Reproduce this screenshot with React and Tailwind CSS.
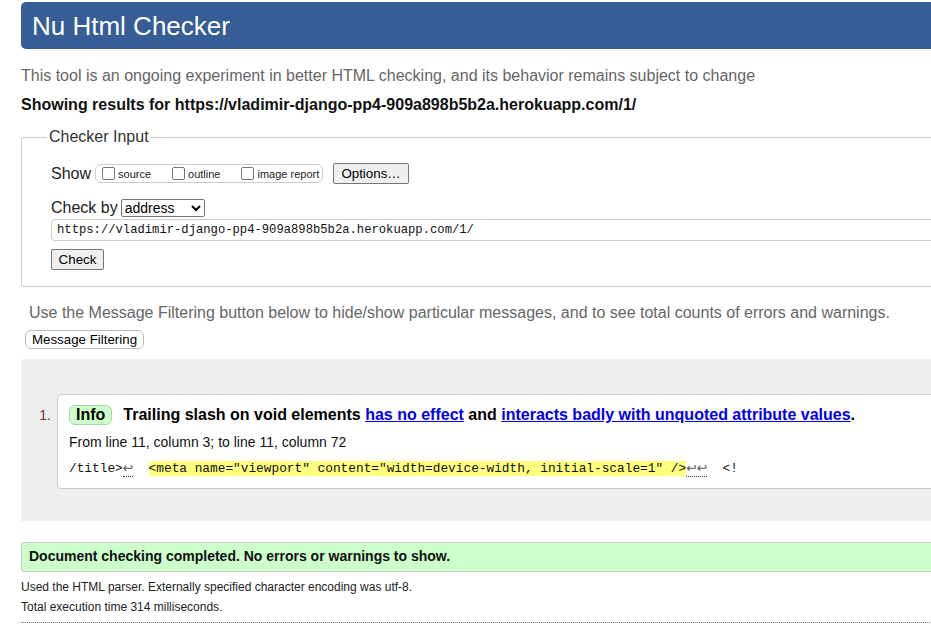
import React from 'react';

const sans = { fontFamily: '"Liberation Sans", Arial, sans-serif' };
const mono = { fontFamily: '"Liberation Mono", "DejaVu Sans Mono", monospace' };

const Box = ({ label }) => (
  <span className="flex items-center">
    <span className="inline-block w-[13px] h-[13px] border border-[#767676] rounded-[2px] bg-white" />
    <span className="ml-[3px] text-[11px] leading-[13px] text-[#222] translate-y-[1px]">{label}</span>
  </span>
);

const Btn = ({ children, className = '' }) => (
  <button className={`bg-[#efefef] border border-[#767676] rounded-[2px] text-[13.33px] text-black leading-none ${className}`}>
    {children}
  </button>
);

// return-arrow glyph used by the source extract
const Ret = () => (
  <span className="text-[#555] text-[12.5px]" style={{ fontFamily: '"DejaVu Sans", sans-serif' }}>↩</span>
);

export default function App() {
  return (
    <div className="w-[931px] h-[627px] overflow-hidden bg-white" style={sans}>
      <div className="w-[1000px] pl-[21px]">
        {/* header */}
        <div className="mt-[2px] h-[47px] rounded-l-[5px] bg-[#365d95] pl-[11px] flex items-center">
          <h1 className="text-[26px] text-white leading-none">Nu Html Checker</h1>
        </div>

        <p className="mt-[18px] text-[16px] leading-[18px] text-[#666]">
          This tool is an ongoing experiment in better HTML checking, and its behavior remains subject to change
        </p>
        <p className="mt-[11px] text-[16px] leading-[18px] font-bold text-[#111]">
          Showing results for https://vladimir-django-pp4-909a898b5b2a.herokuapp.com/1/
        </p>

        {/* checker input */}
        <fieldset className="mt-[14px] border border-[#ccc] rounded-l-[3px] pl-[29px] pb-[16px]">
          <legend className="-ml-[4px] px-[2px] text-[16px] leading-[18px] text-[#333]">Checker Input</legend>
          <div className="mt-[17px] h-[21px] flex items-center">
            <span className="text-[16px] text-[#222]">Show</span>
            <div className="ml-[4px] h-[19px] w-[228px] border border-[#ccc] rounded-[6px] flex items-center pl-[6px]">
              <Box label="source" />
              <span className="ml-[21px]"><Box label="outline" /></span>
              <span className="ml-[21px]"><Box label="image report" /></span>
            </div>
            <Btn className="ml-[10px] h-[21px] w-[76px]">Options…</Btn>
          </div>
          <div className="mt-[15px] h-[18px] flex items-center">
            <span className="text-[16px] text-[#222]">Check by</span>
            <div className="ml-[3px] h-[18px] w-[84px] border border-[#767676] rounded-[2px] flex items-center justify-between px-[3px]">
              <span className="text-[14px] text-black leading-none">address</span>
              <svg width="10" height="7" viewBox="0 0 10 7">
                <path d="M1 1 L5 5 L9 1" fill="none" stroke="#000" strokeWidth="2" />
              </svg>
            </div>
          </div>
          <div className="mt-[2px] h-[22px] border border-[#ccc] rounded-l-[4px] flex items-center pl-[5px]">
            <span className="text-[12.2px] text-[#111]" style={mono}>
              https://vladimir-django-pp4-909a898b5b2a.herokuapp.com/1/
            </span>
          </div>
          <Btn className="mt-[8px] h-[21px] w-[53px] block">Check</Btn>
        </fieldset>

        <p className="mt-[17px] ml-[8px] text-[16px] leading-[18px] text-[#666]">
          Use the Message Filtering button below to hide/show particular messages, and to see total counts of errors and warnings.
        </p>
        <button className="mt-[8px] ml-[4px] h-[19px] w-[119px] border border-[#bbb] rounded-[6px] bg-white text-[13.33px] leading-none text-black">
          Message Filtering
        </button>

        {/* results */}
        <div className="mt-[8px] h-[162px] bg-[#eee] rounded-tl-[4px] pt-[35px] flex">
          <div className="w-[36px] pt-[14px] pr-[6px] text-right text-[14px] leading-none text-[#7a2b2b]">1.</div>
          <div className="flex-1 h-[95px] bg-white border border-[#ccc] rounded-l-[4px] pl-[11px] pt-[10px]">
            <div className="flex items-center h-[20px]">
              <span className="h-[20px] px-[6px] border border-[#aad4aa] bg-[#ccffcc] rounded-[6px] text-[16px] font-bold leading-[18px] text-black">Info</span>
              <span className="ml-[11px] text-[16px] font-bold text-black">
                Trailing slash on void elements{' '}
                <a className="text-[#00e] underline">has no effect</a> and{' '}
                <a className="text-[#00e] underline">interacts badly with unquoted attribute values</a>.
              </span>
            </div>
            <div className="mt-[9px] text-[14px] leading-[16px] text-[#111]">From line 11, column 3; to line 11, column 72</div>
            <div className="mt-[9px] text-[12.8px] leading-[17px] text-[#111] whitespace-pre" style={mono}>
              /title&gt;<span className="border-b border-dotted border-[#333]"><Ret /></span>{'  '}
              <span className="bg-[#ffff80]">&lt;meta name="viewport" content="width=device-width, initial-scale=1" /&gt;</span>
              <span className="border-b border-dotted border-[#333]"><Ret /><Ret /></span>{'  '}&lt;!
            </div>
          </div>
        </div>

        <div className="mt-[21px] h-[30px] bg-[#ccffcc] border border-r-0 border-[#ccc] rounded-l-[3px] flex items-center pl-[7px]">
          <span className="text-[14px] font-bold text-[#111]">Document checking completed. No errors or warnings to show.</span>
        </div>
        <p className="mt-[8px] text-[12px] leading-[14px] text-[#222]">Used the HTML parser. Externally specified character encoding was utf-8.</p>
        <p className="mt-[6px] text-[12px] leading-[14px] text-[#222]">Total execution time 314 milliseconds.</p>
        <div className="mt-[8px] border-t border-dotted border-[#777]" />
      </div>
    </div>
  );
}
